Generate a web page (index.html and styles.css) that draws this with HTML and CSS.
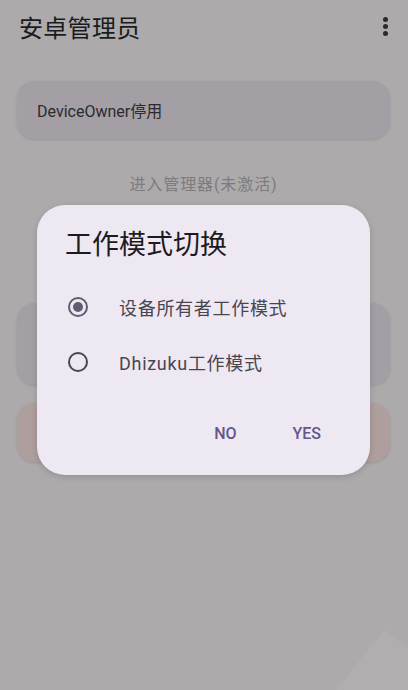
FILE: index.html
```html
<!DOCTYPE html>
<html lang="zh">
	<head>
	<meta charset="utf-8">
	<title>安卓管理员</title>
	<link rel="stylesheet" href="styles.css">
	</head>

	<body>
	<!-- Top bar -->
	<div class="topbar">
		<span class="app-title">安卓管理员</span>
		<span class="menu-dots"><i></i><i></i><i></i></span>
	</div>

	<!-- Main list (behind the dialog) -->
	<div class="content">
		<div class="card card-plain">DeviceOwner停用</div>
		<div class="link-text">进入管理器(未激活)</div>
		<div class="card card-tall"></div>
		<div class="card card-warn"></div>
	</div>

	<div class="glare"></div>

	<!-- Mode switch dialog -->
	<div class="dialog">
		<div class="dialog-title">工作模式切换</div>
		<div class="option">
			<span class="radio checked"></span>
			<span class="option-text">设备所有者工作模式</span>
		</div>
		<div class="option">
			<span class="radio"></span>
			<span class="option-text">Dhizuku工作模式</span>
		</div>
		<div class="actions">
			<button type="button" class="btn">NO</button>
			<button type="button" class="btn">YES</button>
		</div>
	</div>
	</body>
</html>
```

FILE: styles.css
```css
body {
	margin: 0;
	height: 690px;
	overflow: hidden;
	position: relative;
	background-color: #acaaab;
	font-family: Roboto, "Noto Sans CJK SC", sans-serif;
}

.topbar {
	height: 52px;
	display: flex;
	align-items: center;
	justify-content: space-between;
	padding: 0 20px 0 19px;
}

.app-title {
	font-size: 24px;
	color: #1b1a1c;
	letter-spacing: 0.3px;
}

.menu-dots {
	display: flex;
	flex-direction: column;
	gap: 2px;
}

.menu-dots i {
	display: block;
	width: 5px;
	height: 5px;
	border-radius: 50%;
	background-color: #2b2a2c;
}

.content {
	padding: 29px 18px 0 17px;
}

.card {
	border-radius: 18px;
	box-sizing: border-box;
	box-shadow: 0 1px 3px rgba(0, 0, 0, 0.12);
}

.card-plain {
	height: 58px;
	background-color: #a39fa5;
	color: #2c2a2e;
	font-size: 16px;
	display: flex;
	align-items: center;
	padding-left: 20px;
}

.link-text {
	text-align: center;
	color: #7e7b7f;
	font-size: 16px;
	letter-spacing: 0.9px;
	margin: 34px 0 0;
	line-height: 24px;
}

.card-tall {
	height: 82px;
	margin-top: 106px;
	background-color: #a39fa5;
}

.card-warn {
	height: 59px;
	margin-top: 18px;
	background-color: #ae9e9d;
}

.glare {
	position: absolute;
	right: 0;
	bottom: 0;
	width: 120px;
	height: 60px;
	clip-path: polygon(40% 100%, 80% 0, 100% 30%, 100% 100%);
	background-color: #b9b7b8;
	opacity: 0.35;
}

.dialog {
	position: absolute;
	left: 37px;
	top: 205px;
	width: 333px;
	height: 270px;
	box-sizing: border-box;
	border-radius: 28px;
	background-color: #eee8f2;
	padding: 23px 28px 0 28px;
	box-shadow: 0 2px 6px rgba(0, 0, 0, 0.15);
}

.dialog-title {
	font-size: 27px;
	line-height: 34px;
	color: #1d1b20;
	margin-bottom: 17px;
}

.option {
	display: flex;
	align-items: center;
	height: 55px;
}

.radio {
	width: 16px;
	height: 16px;
	border: 2px solid #4a4650;
	border-radius: 50%;
	margin-left: 3px;
	margin-right: 31px;
	position: relative;
}

.radio.checked {
	border-color: #625b71;
}

.radio.checked::after {
	content: "";
	position: absolute;
	left: 3px;
	top: 3px;
	width: 10px;
	height: 10px;
	border-radius: 50%;
	background-color: #625b71;
}

.option-text {
	font-size: 18px;
	color: #49454f;
	letter-spacing: 0.7px;
}

.actions {
	display: flex;
	justify-content: flex-end;
	gap: 56px;
	margin-top: 35px;
	padding-right: 21px;
}

.btn {
	border: none;
	background: none;
	padding: 0;
	font-family: Roboto, sans-serif;
	font-weight: 500;
	font-size: 16px;
	color: #65558f;
	line-height: 20px;
}
```
